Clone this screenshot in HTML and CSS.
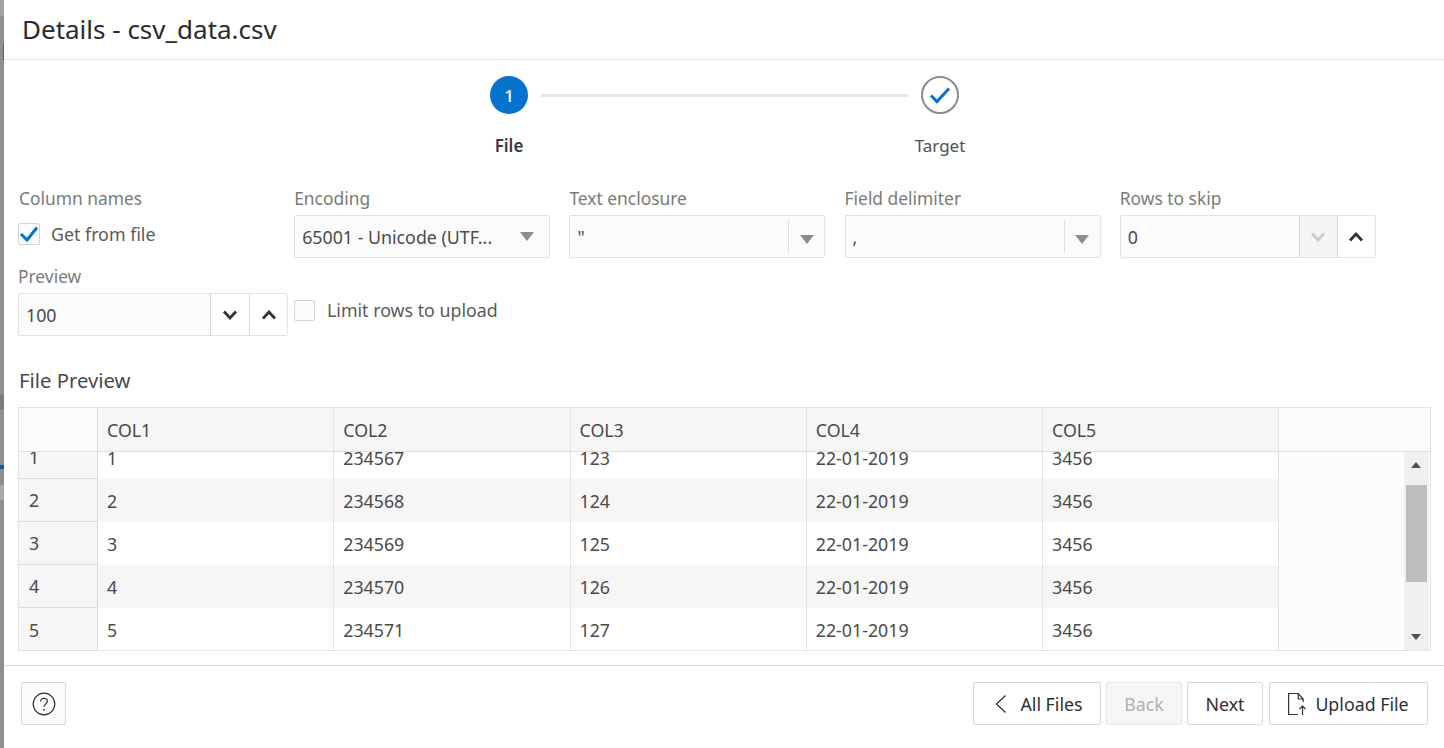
FILE: index.html
```html
<!DOCTYPE html>
<html lang="en">
<head>
<meta charset="utf-8">
<title>Details - csv_data.csv</title>
<link rel="stylesheet" href="styles.css">
</head>
<body>
<div class="backdrop">
  <span class="bd bd-a"></span><span class="bd bd-b"></span><span class="bd bd-e"></span><span class="bd bd-c"></span><span class="bd bd-d"></span>
</div>
<main class="dialog">
  <header class="title-bar"><h1>Details - csv_data.csv</h1></header>

  <section class="stepper">
    <div class="step step-file">
      <div class="circle current">1</div>
      <div class="step-label strong">File</div>
    </div>
    <div class="step-line"></div>
    <div class="step step-target">
      <div class="circle done">
        <svg width="22" height="18" viewBox="0 0 22 18"><path d="M2 9.500l6 6L20 2.500" fill="none" stroke="#0572ce" stroke-width="3"/></svg>
      </div>
      <div class="step-label">Target</div>
    </div>
  </section>

  <section class="form-row first">
    <div class="field f-col">
      <label class="lbl">Column names</label>
      <div class="check-line">
        <span class="checkbox"><svg width="20" height="18" viewBox="0 0 20 18"><path d="M2 9l6 6L18 2.500" fill="none" stroke="#0572ce" stroke-width="3"/></svg></span>
        <span class="check-text">Get from file</span>
      </div>
    </div>
    <div class="field">
      <label class="lbl">Encoding</label>
      <div class="box select plain"><span class="val">65001 - Unicode (UTF...</span><span class="tri"></span></div>
    </div>
    <div class="field">
      <label class="lbl">Text enclosure</label>
      <div class="box select"><span class="val">"</span><span class="sel-btn"><span class="tri"></span></span></div>
    </div>
    <div class="field">
      <label class="lbl">Field delimiter</label>
      <div class="box select"><span class="val">,</span><span class="sel-btn"><span class="tri"></span></span></div>
    </div>
    <div class="field">
      <label class="lbl">Rows to skip</label>
      <div class="box number">
        <span class="val">0</span>
        <span class="spin disabled"><svg width="16" height="10" viewBox="0 0 16 10"><path d="M2 1.500l6 6.500 6-6.500" fill="none" stroke="#c9cbcc" stroke-width="2.800"/></svg></span>
        <span class="spin"><svg width="16" height="10" viewBox="0 0 16 10"><path d="M2 8.500l6-6.500 6 6.500" fill="none" stroke="#333" stroke-width="2.800"/></svg></span>
      </div>
    </div>
  </section>

  <section class="form-row second">
    <div class="field preview">
      <label class="lbl">Preview</label>
      <div class="box number">
        <span class="val">100</span>
        <span class="spin"><svg width="16" height="10" viewBox="0 0 16 10"><path d="M2 1.500l6 6.500 6-6.500" fill="none" stroke="#333" stroke-width="2.800"/></svg></span>
        <span class="spin"><svg width="16" height="10" viewBox="0 0 16 10"><path d="M2 8.500l6-6.500 6 6.500" fill="none" stroke="#333" stroke-width="2.800"/></svg></span>
      </div>
    </div>
    <div class="check-line limit">
      <span class="checkbox"></span>
      <span class="check-text">Limit rows to upload</span>
    </div>
  </section>

  <h2 class="section-title">File Preview</h2>

  <section class="grid">
    <div class="grid-head">
      <div class="cell rn top"></div>
      <div class="cell c">COL1</div>
      <div class="cell c">COL2</div>
      <div class="cell c">COL3</div>
      <div class="cell c">COL4</div>
      <div class="cell c">COL5</div>
      <div class="cell top end"></div>
    </div>
    <div class="grid-view">
      <div class="grid-rows">
        <div class="row"><div class="cell rn">1</div><div class="cell c">1</div><div class="cell c">234567</div><div class="cell c">123</div><div class="cell c">22-01-2019</div><div class="cell c">3456</div></div>
        <div class="row alt"><div class="cell rn">2</div><div class="cell c">2</div><div class="cell c">234568</div><div class="cell c">124</div><div class="cell c">22-01-2019</div><div class="cell c">3456</div></div>
        <div class="row"><div class="cell rn">3</div><div class="cell c">3</div><div class="cell c">234569</div><div class="cell c">125</div><div class="cell c">22-01-2019</div><div class="cell c">3456</div></div>
        <div class="row alt"><div class="cell rn">4</div><div class="cell c">4</div><div class="cell c">234570</div><div class="cell c">126</div><div class="cell c">22-01-2019</div><div class="cell c">3456</div></div>
        <div class="row"><div class="cell rn">5</div><div class="cell c">5</div><div class="cell c">234571</div><div class="cell c">127</div><div class="cell c">22-01-2019</div><div class="cell c">3456</div></div>
      </div>
      <div class="filler"></div>
      <div class="scrollbar">
        <span class="arrow up"></span>
        <span class="thumb"></span>
        <span class="arrow down"></span>
      </div>
    </div>
  </section>

  <footer class="footer">
    <button class="btn help" aria-label="Help">
      <svg width="26" height="26" viewBox="0 0 26 26"><circle cx="13" cy="13" r="10.800" fill="none" stroke="#333" stroke-width="1.200"/><path d="M9.600 10.500c0-2 1.500-3.200 3.400-3.200s3.400 1.200 3.400 3c0 2.600-3.400 2.700-3.400 5.500" fill="none" stroke="#333" stroke-width="1.200"/><circle cx="13" cy="18.700" r=".9" fill="#333"/></svg>
    </button>
    <div class="actions">
      <button class="btn all"><svg width="14" height="20" viewBox="0 0 14 20"><path d="M10.500 1.500L1.500 10l9 8.500" fill="none" stroke="#333" stroke-width="1.300"/></svg>All Files</button>
      <button class="btn back" disabled>Back</button>
      <button class="btn next">Next</button>
      <button class="btn upload"><svg width="20" height="24" viewBox="0 0 20 24"><path d="M10 22.500H.6V1.500h9.600l5 5.500v3M10.200 1.500v5.500h5" fill="none" stroke="#333" stroke-width="1.200"/><path d="M14.500 23v-9M11.500 17l3-3 3 3" fill="none" stroke="#333" stroke-width="1.200"/></svg>Upload File</button>
    </div>
  </footer>
</main>
</body>
</html>
```
FILE: styles.css
```css
* { box-sizing: border-box; }
html, body { margin: 0; height: 100%; overflow: hidden; }
body {
  display: flex;
  width: 1444px;
  height: 748px;
  background: #fff;
  font-family: "Noto Sans", "Open Sans", sans-serif;
  font-size: 17.800px;
  color: #4a4a4a;
}
.backdrop { position: relative; width: 4px; flex: none; background: #8f8f8f; }
.bd { position: absolute; left: 0; width: 4px; }
.bd-a { top: 0; height: 16px; background: #a3a3a3; }
.bd-b { top: 44px; height: 16px; left: 3px; width: 1px; background: #6e5a4a; }
.bd-e { top: 395px; height: 14px; background: #7a7a7a; }
.bd-c { top: 465px; height: 4px; background: #0b5f99; }
.bd-d { top: 485px; height: 15px; background: #a9a9a9; }
.dialog { flex: 1; min-width: 0; display: flex; flex-direction: column; background: #fff; }

.title-bar { height: 60px; flex: none; border-bottom: 1px solid #e3e3e3; padding: 0 18px 2px; display: flex; align-items: center; }
h1 { margin: 0; font-size: 26px; font-weight: 400; color: #2b2b2b; }

.stepper { position: relative; height: 126px; flex: none; display: flex; align-items: flex-start; padding: 16px 0 0 473px; }
.step { width: 64px; display: flex; flex-direction: column; align-items: center; flex: none; }
.circle { width: 38px; height: 38px; border-radius: 50%; display: flex; align-items: center; justify-content: center; }
.current { background: #0572ce; color: #fff; font-size: 17px; font-weight: 500; }
.done { border: 2px solid #8a8a8a; background: #fff; }
.step-label { margin-top: 20px; font-size: 17px; line-height: 24px; color: #4f4f4f; }
.step-label.strong { font-weight: 600; color: #3a3a3a; }
.step-line { width: 367px; height: 3px; background: #e5e6e6; margin: 18px 0 0 0; flex: none; }

.form-row { display: flex; flex: none; }
.first { padding-left: 15px; gap: 19.200px; height: 78px; }
.field { width: 256px; flex: none; }
.lbl { display: block; font-size: 17.400px; line-height: 24px; color: #7a7a7a; height: 29px; }
.box { height: 43px; border: 1px solid #e1e2e2; border-radius: 2px; background: #fbfbfb; display: flex; align-items: center; color: #4a4a4a; }
.val { flex: 1; padding: 1px 0 0 7px; white-space: nowrap; overflow: hidden; }
.tri { width: 0; height: 0; border-left: 7px solid transparent; border-right: 7px solid transparent; border-top: 9px solid #8a8d8e; }
.select.plain { padding-right: 15px; }
.sel-btn { width: 36px; height: 33px; border-left: 1px solid #dfdfdf; display: flex; align-items: center; justify-content: center; padding-top: 5px; }
.number .spin { width: 39px; height: 100%; flex: none; border-left: 1px solid #d8d8d8; display: flex; align-items: center; justify-content: center; background: #fff; }
.number .spin:last-child { width: 38px; }
.number .spin.disabled { background: #f5f5f5; width: 38px; }

.check-line { display: flex; align-items: center; }
.checkbox { width: 22px; height: 22px; border: 1px solid #d4d4d4; border-radius: 2px; background: #fbfbfb; display: flex; align-items: center; justify-content: center; flex: none; }
.check-text { margin-left: 11px; color: #5a5a5a; }
.f-col .check-line { margin: 2px 0 0 -1px; height: 34px; }

.second { padding-left: 14px; height: 103px; align-items: flex-start; gap: 6px; }
.preview { width: 270px; }
.limit { margin-top: 29px; height: 34px; }
.limit .checkbox { width: 21px; height: 21px; }
.limit .check-text { margin-left: 12px; }

.section-title { margin: 0 0 0 15px; height: 40px; font-size: 20.300px; line-height: 26px; font-weight: 400; color: #4a4a4a; flex: none; }

.grid { margin-left: 14px; width: 1413px; height: 244px; border: 1px solid #e3e3e3; flex: none; display: flex; flex-direction: column; }
.grid-head { display: flex; height: 44px; flex: none; border-bottom: 1px solid #dfdfdf; background: #f6f6f6; }
.cell { flex: none; width: 236.250px; border-right: 1px solid #e3e3e3; padding-left: 9px; display: flex; align-items: center; height: 100%; white-space: nowrap; }
.cell.rn { width: 79px; background: #f6f6f6; padding-left: 10px; border-right: 1px solid #dcdcdc; }
.cell.top { background: #fcfcfc; }
.cell.end { flex: 1; width: auto; border: 0; }
.grid-view { flex: 1; min-height: 0; position: relative; display: flex; overflow: hidden; background: #fcfcfc; }
.grid-rows { width: 1260px; flex: none; margin-top: -16px; }
.row { display: flex; height: 43px; background: #fff; }
.row.alt { background: #f6f6f6; }
.row .cell.rn { border-bottom: 1px solid #dcdcdc; }
.row:last-child .cell.rn { border-bottom: 0; }
.filler { flex: 1; }
.scrollbar { position: relative; width: 25px; margin-right: 1px; background: #f0f0f0; flex: none; }
.thumb { position: absolute; left: 2px; right: 2px; top: 33px; height: 97px; background: #bdbdbd; }
.arrow { position: absolute; left: 7px; width: 0; height: 0; border-left: 5.500px solid transparent; border-right: 5.500px solid transparent; }
.arrow.up { top: 10px; border-bottom: 6px solid #505050; }
.arrow.down { bottom: 10px; border-top: 6px solid #505050; }

.footer { margin-top: 14px; border-top: 1px solid #d9d9d9; flex: 1; display: flex; align-items: flex-start; justify-content: space-between; padding: 16px 16px 0 17px; }
.actions { display: flex; gap: 5px; }
.btn { height: 43px; border: 1px solid #d8d8d8; border-radius: 2px; background: #fff; font: inherit; color: #2f2f2f; display: flex; align-items: center; justify-content: center; padding: 0; }
.help { width: 45px; background: #fcfcfc; }
.all { width: 128px; gap: 11px; padding-left: 4px; }
.back { width: 76px; background: #f6f6f6; color: #b0b0b0; border-color: #e6e6e6; }
.next { width: 76px; }
.upload { width: 159px; margin-left: 1px; gap: 7px; }
```
